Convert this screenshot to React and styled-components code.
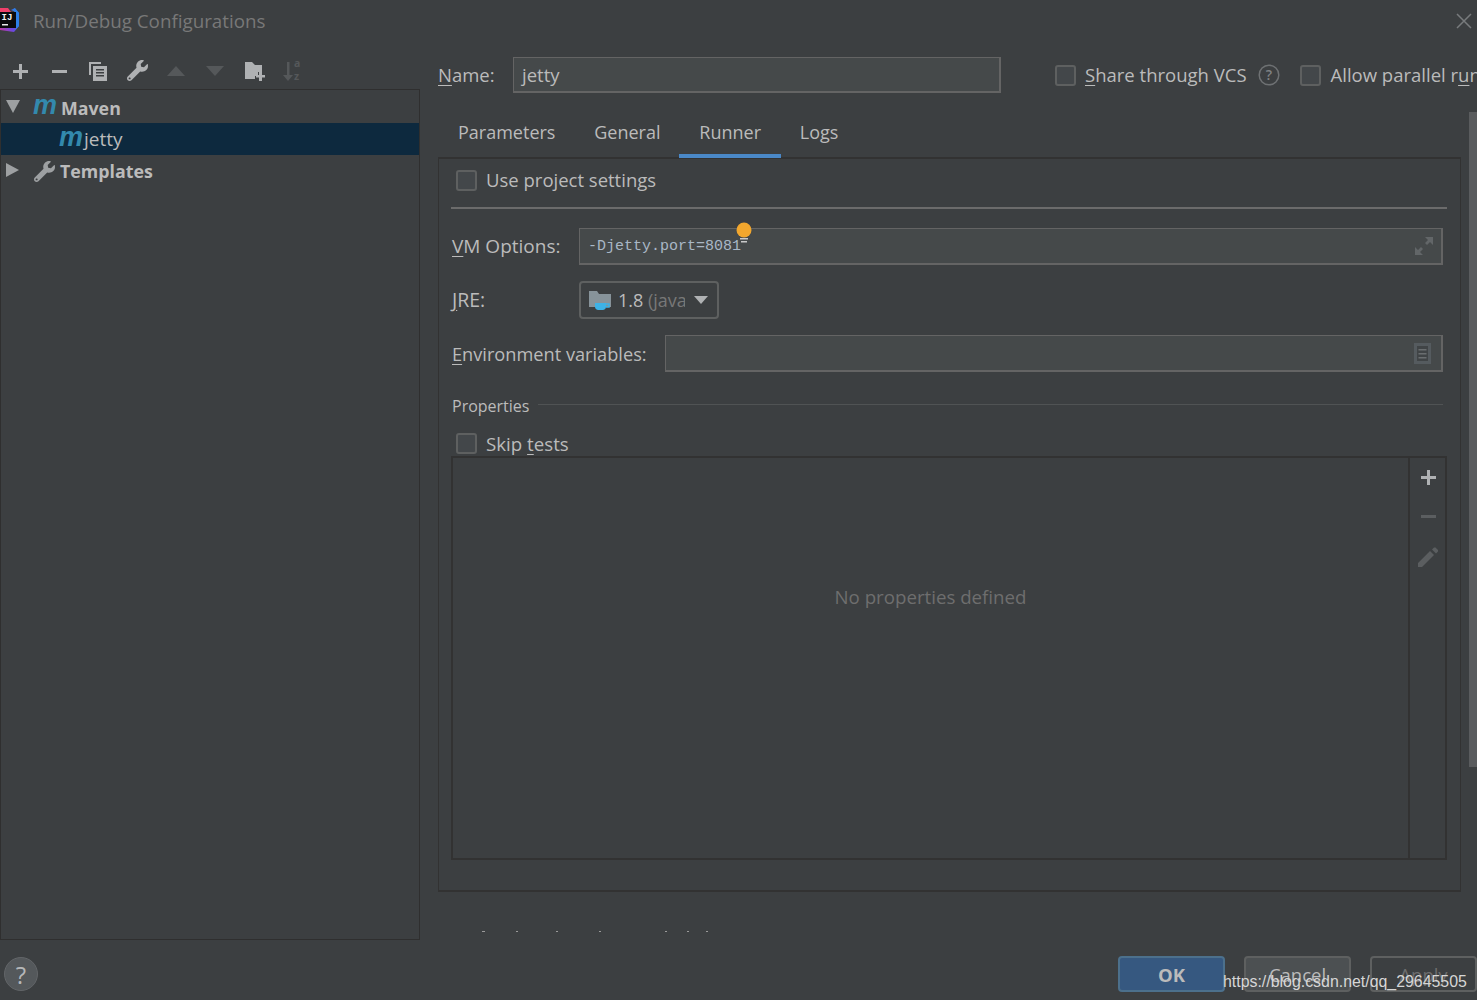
import React from 'react'
import styled, { createGlobalStyle } from 'styled-components'
import { FaWrench } from 'react-icons/fa'

const GlobalStyle = createGlobalStyle`
  html, body { margin: 0; padding: 0; background: #3c3f41; }
  * { box-sizing: border-box; }
`

const Dialog = styled.div`
  position: relative;
  width: 1477px;
  height: 1000px;
  overflow: hidden;
  background: #3c3f41;
  color: #bbbbbb;
  font-family: "Open Sans", "Noto Sans", sans-serif;
  font-size: 18.5px;
  display: flex;
  flex-direction: column;
`

/* title bar */
const TitleBar = styled.div`
  height: 42px;
  display: flex;
  align-items: center;
  justify-content: space-between;
  padding: 0 5px 0 0;
  flex: none;
`
const TitleLeft = styled.div`
  display: flex;
  align-items: center;
  gap: 14px;
`
const TitleText = styled.span`
  color: #787878;
  font-size: 18.8px;
`

const Body = styled.div`
  flex: 1;
  min-height: 0;
  display: grid;
  grid-template-columns: 420px 1fr;
`

/* left side */
const Sidebar = styled.div`
  display: flex;
  flex-direction: column;
  height: 898px;
`
const Toolbar = styled.div`
  height: 47px;
  flex: none;
  display: flex;
  align-items: center;
  padding: 10px 0 0 9px;
  gap: 17px;
`
const ToolIcon = styled.span`
  width: 22px;
  height: 22px;
  display: flex;
  align-items: center;
  justify-content: center;
  color: ${p => (p.$dim ? '#55585a' : '#afb1b3')};
`
const TreePanel = styled.div`
  flex: 1;
  border: 1px solid #2f2f2f;
  padding-top: 1px;
`
const TreeRow = styled.div`
  height: 32px;
  display: flex;
  align-items: center;
  padding-left: ${p => p.$indent || 0}px;
  background: ${p => (p.$selected ? '#0d293e' : 'transparent')};
  font-weight: ${p => (p.$bold ? 700 : 400)};
  font-size: ${p => (p.$bold ? 17.8 : 19)}px;
`
const Arrow = styled.span`
  width: 0;
  height: 0;
  flex: none;
  margin-left: 5px;
  margin-right: 13px;
  ${p => p.$open
    ? 'border-left: 7px solid transparent; border-right: 7px solid transparent; border-top: 13px solid #9da0a2; margin-top: -2px;'
    : 'border-top: 7px solid transparent; border-bottom: 7px solid transparent; border-left: 13px solid #9da0a2; margin-top: -2px; margin-right: 15px;'}
`
const MavenMark = styled.span`
  color: #3389ad;
  font-family: "Liberation Sans", sans-serif;
  font-style: italic;
  font-weight: 700;
  font-size: 27px;
  line-height: 24px;
  width: ${p => p.$w || 28}px;
  flex: none;
  position: relative;
  top: -2px;
`
const TreeLabel = styled.span`
  padding-top: 1px;
`
const TreeIcon = styled.span`
  width: 26px;
  flex: none;
  display: flex;
  align-items: center;
  color: #9da0a2;
`

/* right side */
const Main = styled.div`
  padding-left: 18px;
  min-width: 0;
  display: flex;
  flex-direction: column;
`
const NameRow = styled.div`
  margin-top: 15px;
  height: 36px;
  display: flex;
  align-items: center;
  white-space: nowrap;
  overflow: hidden;
  flex: none;
`
const Label = styled.label`
  flex: none;
  width: ${p => (p.$w ? `${p.$w}px` : 'auto')};
  font-size: ${p => p.$size || 18.5}px;
  padding-left: ${p => p.$pl || 0}px;
  margin-bottom: ${p => (p.$flat ? 0 : 2)}px;
`
const Mn = styled.span`
  text-decoration: underline;
  text-underline-offset: 3px;
`
const TextField = styled.div`
  height: ${p => p.$h || 36}px;
  background: #45494a;
  border: 2px solid #646464;
  border-width: 1px 2px 2px 1px;
  display: flex;
  align-items: center;
  justify-content: space-between;
  padding: 0 ${p => p.$pr || 7}px 0 8px;
  position: relative;
  flex: ${p => (p.$w ? 'none' : 1)};
  width: ${p => (p.$w ? `${p.$w}px` : 'auto')};
  min-width: 0;
`
const Check = styled.span`
  width: 21px;
  height: 21px;
  flex: none;
  border: 2px solid #5e6060;
  border-radius: 3px;
  background: #43474a;
`
const CheckRow = styled.div`
  display: flex;
  align-items: center;
  gap: ${p => p.$gap || 9}px;
  margin-left: ${p => p.$ml || 0}px;
`
const CheckText = styled.span`
  margin-bottom: 2px;
`
const Scroller = styled.div`
  flex: 1;
  min-height: 0;
  display: flex;
  margin-top: 19px;
`
const Pane = styled.div`
  width: 1023px;
  height: 820px;
  overflow: hidden;
  flex: none;
`
const ScrollThumb = styled.div`
  width: 8px;
  height: 655px;
  margin-left: 8px;
  background: #5a5c5e;
  flex: none;
`
const Tabs = styled.div`
  display: flex;
  height: 46px;
`
const Tab = styled.div`
  padding: 0 20px 2px;
  height: 46px;
  display: flex;
  align-items: center;
  font-size: 18px;
  border-bottom: 4px solid ${p => (p.$active ? '#4a88c7' : 'transparent')};
  margin-right: -1.200px;
  position: relative;
`
const TabPanel = styled.div`
  height: 735px;
  margin-top: -1px;
  border: 2px solid #323232;
  border-width: 2px 1px 2px 1px;
  padding: 0 13px 0 12px;
  display: flex;
  flex-direction: column;
`
const TopCheck = styled(CheckRow)`
  height: 46px;
  padding: 0 0 4px 5px;
  flex: none;
`
const Rule = styled.div`
  height: 2px;
  background: #6b6b6b;
  flex: none;
  margin-top: 2px;
`
const FormRow = styled.div`
  display: flex;
  align-items: center;
  flex: none;
  margin-top: ${p => p.$mt}px;
  height: ${p => p.$h}px;
  padding-right: 4px;
`
const Mono = styled.span`
  font-family: "Liberation Mono", monospace;
  font-size: 15px;
  color: #a9b7c6;
`
const Bulb = styled.span`
  position: absolute;
  left: 156px;
  top: -7px;
  width: 16px;
  height: 23px;
  display: block;
`
const Combo = styled.div`
  width: 140px;
  height: 38px;
  border: 2px solid #5e6060;
  border-radius: 4px;
  display: flex;
  align-items: center;
  padding-left: 8px;
  gap: 6px;
  white-space: nowrap;
`
const ComboText = styled.span`
  width: 67px;
  overflow: hidden;
  font-size: 18px;
`
const Muted = styled.span`
  color: #787878;
`
const ComboArrow = styled.span`
  width: 0;
  height: 0;
  flex: none;
  margin-left: 3px;
  border-left: 7px solid transparent;
  border-right: 7px solid transparent;
  border-top: 8px solid #afb1b3;
`
const GroupRow = styled.div`
  display: flex;
  align-items: center;
  gap: 9px;
  flex: none;
  margin-top: 18px;
  height: 30px;
  padding: 2px 4px 0 1px;
  font-size: 16px;
`
const GroupLine = styled.span`
  flex: 1;
  height: 1px;
  background: #505354;
  margin-top: -4px;
`
const SkipCheck = styled(CheckRow)`
  height: 27px;
  padding-left: 5px;
  margin-top: 10px;
  flex: none;
  font-size: 18.7px;
`
const PropTable = styled.div`
  height: 404px;
  margin-top: -1px;
  border: 2px solid #323232;
  display: flex;
  flex: none;
`
const EmptyArea = styled.div`
  flex: 1;
  display: flex;
  align-items: center;
  justify-content: center;
  color: #6e6e6e;
  font-size: 18.7px;
  padding-bottom: 124px;
`
const SideTools = styled.div`
  width: 37px;
  flex: none;
  border-left: 2px solid #323232;
  display: flex;
  flex-direction: column;
  align-items: center;
  padding-top: 10px;
  gap: 21px;
`
const ClippedText = styled.div`
  margin-top: 39px;
  margin-left: 44px;
  display: flex;
  height: 2px;
`
const ClipDot = styled.span`
  width: ${p => p.$w || 2}px;
  height: 2px;
  background: #9a9a9a;
  margin-left: ${p => p.$gap}px;
`

/* footer */
const Footer = styled.div`
  height: 60px;
  flex: none;
  display: flex;
  align-items: flex-start;
  justify-content: space-between;
  padding: 16px 0 0 4px;
`
const HelpButton = styled.div`
  width: 34px;
  height: 34px;
  margin-top: 1px;
  border-radius: 50%;
  background: #54585b;
  border: 1px solid #626568;
  color: #b5b7b9;
  font-size: 24px;
  display: flex;
  align-items: center;
  justify-content: center;
`
const Buttons = styled.div`
  display: flex;
  gap: 19px;
`
const Button = styled.div`
  width: 107px;
  height: 36px;
  border-radius: 4px;
  border: 2px solid ${p => (p.$primary ? '#4c708c' : '#5e6060')};
  background: ${p => (p.$primary ? '#365880' : p.$off ? 'transparent' : '#4c5052')};
  color: ${p => (p.$off ? '#6e6e6e' : '#bbbbbb')};
  font-weight: ${p => (p.$primary ? 700 : 400)};
  padding-top: 1px;
  display: flex;
  align-items: center;
  justify-content: center;
`
const Watermark = styled.div`
  position: absolute;
  left: 1223px;
  top: 972px;
  font-family: "Liberation Sans", sans-serif;
  font-size: 15.900px;
  line-height: 20px;
  color: #d6d6d6;
  white-space: nowrap;
`

const Plus = ({ c = 'currentColor' }) => (
  <svg width="18" height="18" viewBox="0 0 18 18"><path d="M8 2h3v6h6v3h-6v6H8v-6H2V8h6z" fill={c} /></svg>
)
const Minus = ({ c = 'currentColor' }) => (
  <svg width="18" height="18" viewBox="0 0 18 18"><path d="M2 8h15v3H2z" fill={c} /></svg>
)
const CopyIcon = () => (
  <svg width="20" height="20" viewBox="0 0 20 20">
    <path d="M1 1h12v2H3v11H1z" fill="currentColor" />
    <path d="M5 5h14v15H5z" fill="currentColor" />
    <path d="M8 8h8v1.500H8zM8 11h8v1.500H8zM8 14h8v1.500H8z" fill="#3c3f41" />
  </svg>
)
const TriUp = () => (
  <svg width="18" height="10" viewBox="0 0 18 10"><path d="M9 0l9 10H0z" fill="currentColor" /></svg>
)
const TriDown = () => (
  <svg width="18" height="10" viewBox="0 0 18 10"><path d="M0 0h18L9 10z" fill="currentColor" /></svg>
)
const FolderPlus = () => (
  <svg width="22" height="20" viewBox="-1 0 22 20">
    <path d="M1 1h7l3 3h7v7h-4v4h-3v3H1z" fill="currentColor" />
    <path d="M15 11h3v3h3v2.500h-3V20h-3v-3.500h-3V14h3z" fill="currentColor" />
  </svg>
)
const SortIcon = () => (
  <svg width="20" height="22" viewBox="0 0 20 22" fill="currentColor" style={{ overflow: 'visible' }}>
    <path d="M4 2h2.500v13H10l-5 6-5-6h4z" />
    <text x="11" y="7" fontSize="10.500" fontWeight="700" fontFamily="Open Sans, sans-serif">a</text>
    <text x="11" y="20" fontSize="10.500" fontWeight="700" fontFamily="Open Sans, sans-serif">z</text>
  </svg>
)
const AppLogo = () => (
  <svg width="19" height="26" viewBox="0 0 19 26" style={{ display: 'block', marginTop: -2 }}>
    <defs>
      <linearGradient id="ijg" x1="0" y1="1" x2="1" y2="0.300">
        <stop offset="0" stopColor="#c93a9c" />
        <stop offset="0.500" stopColor="#6a48e0" />
        <stop offset="1" stopColor="#2d7fe8" />
      </linearGradient>
    </defs>
    <path d="M0 1h8l3 4H0z" fill="#ef3f6a" />
    <path d="M11 3l4-2 4 5v13l-5 6-7-1-7-1v-5h16V5z" fill="url(#ijg)" />
    <path d="M14 1l5 5v13l-3 3z" fill="#2d7fe8" />
    <rect x="0" y="5" width="16" height="16" fill="#0b0b0d" />
    <text x="1.500" y="13" fontSize="9" fontWeight="700" fill="#f2f2f2" fontFamily="Liberation Mono, monospace">IJ</text>
    <rect x="2" y="17" width="6" height="1.500" fill="#e8e8e8" />
  </svg>
)
const CloseIcon = () => (
  <svg width="16" height="16" viewBox="0 0 16 16"><path d="M1 1l14 14M15 1L1 15" stroke="#787b7d" strokeWidth="1.500" fill="none" /></svg>
)
const HelpRing = () => (
  <svg width="22" height="22" viewBox="0 0 22 22" style={{ flex: 'none' }}>
    <circle cx="11" cy="11" r="9.800" stroke="#6e7173" strokeWidth="1.500" fill="none" />
    <text x="11" y="16" textAnchor="middle" fontSize="14" fontWeight="600" fill="#7f8284" fontFamily="Open Sans, sans-serif">?</text>
  </svg>
)
const ExpandIcon = () => (
  <svg width="20" height="20" viewBox="0 0 20 20" fill="#626668">
    <path d="M11 1h8v8l-3-3-3 3-2-2 3-3zM1 11l3 3 3-3 2 2-3 3 3 3H1z" />
  </svg>
)
const DocIcon = () => (
  <svg width="17" height="21" viewBox="0 0 17 21">
    <rect x="1.500" y="1.500" width="14" height="18" fill="#404446" stroke="#555b5f" strokeWidth="3" />
    <path d="M4.500 6h8v1.500h-8zM4.500 10h8v1.500h-8zM4.500 14h8v1.500h-8z" fill="#6a6e70" />
  </svg>
)
const PencilIcon = () => (
  <svg width="22" height="22" viewBox="0 0 22 22" fill="#5b5e60">
    <path d="M1 17L13 5l4 4L5 21H1zM15 3.500L17 1.500h1.500L21 4v1.500L19 7.500z" />
  </svg>
)
const JreIcon = () => (
  <svg width="23" height="22" viewBox="0 0 23 22">
    <path d="M0 2h8l2 3h12v13H0z" fill="#87939a" />
    <path d="M6 14h11v4c0 2-2 3-3 3H9c-1 0-3-1-3-3z" fill="#3db2e6" />
    <path d="M17 15h3v3h-3" fill="none" stroke="#3db2e6" strokeWidth="1.500" />
  </svg>
)
const BulbIcon = () => (
  <svg width="16" height="23" viewBox="0 0 16 23">
    <circle cx="8" cy="8" r="7.500" fill="#f2a72e" />
    <path d="M4 16h8v1.500H4zM5 19h6v1.500H5z" fill="#c9c9c9" />
  </svg>
)

const clipDots = [
  { gap: 0, w: 3 }, { gap: 31 }, { gap: 38 }, { gap: 41 }, { gap: 64 }, { gap: 20 }, { gap: 17 },
]

export default function App() {
  return (
    <Dialog>
      <GlobalStyle />
      <TitleBar>
        <TitleLeft>
          <AppLogo />
          <TitleText>Run/Debug Configurations</TitleText>
        </TitleLeft>
        <CloseIcon />
      </TitleBar>

      <Body>
        <Sidebar>
          <Toolbar>
            <ToolIcon><Plus /></ToolIcon>
            <ToolIcon><Minus /></ToolIcon>
            <ToolIcon><CopyIcon /></ToolIcon>
            <ToolIcon><FaWrench size={21} /></ToolIcon>
            <ToolIcon $dim><TriUp /></ToolIcon>
            <ToolIcon $dim><TriDown /></ToolIcon>
            <ToolIcon><FolderPlus /></ToolIcon>
            <ToolIcon $dim><SortIcon /></ToolIcon>
          </Toolbar>
          <TreePanel>
            <TreeRow $bold>
              <Arrow $open />
              <MavenMark>m</MavenMark>
              <TreeLabel>Maven</TreeLabel>
            </TreeRow>
            <TreeRow $selected $indent={58}>
              <MavenMark $w={25}>m</MavenMark>
              jetty
            </TreeRow>
            <TreeRow $bold>
              <Arrow />
              <TreeIcon><FaWrench size={21} /></TreeIcon>
              Templates
            </TreeRow>
          </TreePanel>
        </Sidebar>

        <Main>
          <NameRow>
            <Label $w={75}><Mn>N</Mn>ame:</Label>
            <TextField $w={488}>jetty</TextField>
            <CheckRow $ml={54}>
              <Check />
              <CheckText><Mn>S</Mn>hare through VCS</CheckText>
            </CheckRow>
            <CheckRow $ml={11}><HelpRing /></CheckRow>
            <CheckRow $ml={20} $gap={10}>
              <Check />
              <CheckText>Allow parallel r<Mn>u</Mn>n</CheckText>
            </CheckRow>
          </NameRow>

          <Scroller>
            <Pane>
              <Tabs>
                <Tab>Parameters</Tab>
                <Tab>General</Tab>
                <Tab $active>Runner</Tab>
                <Tab>Logs</Tab>
              </Tabs>
              <TabPanel>
                <TopCheck>
                  <Check />
                  <CheckText>Use project settings</CheckText>
                </TopCheck>
                <Rule />
                <FormRow $mt={19} $h={37}>
                  <Label $w={128} $size={19} $pl={1}><Mn>V</Mn>M Options:</Label>
                  <TextField $h={37}>
                    <Mono>-Djetty.port=8081</Mono>
                    <Bulb><BulbIcon /></Bulb>
                    <ExpandIcon />
                  </TextField>
                </FormRow>
                <FormRow $mt={16} $h={38}>
                  <Label $w={128} $size={19.5} $pl={1}><Mn>J</Mn>RE:</Label>
                  <Combo>
                    <JreIcon />
                    <ComboText>1.8 <Muted>(java 1.8)</Muted></ComboText>
                    <ComboArrow />
                  </Combo>
                </FormRow>
                <FormRow $mt={16} $h={37}>
                  <Label $w={214} $size={18.2} $pl={1} $flat><Mn>E</Mn>nvironment variables:</Label>
                  <TextField $h={37} $pr={10}>
                    <span />
                    <DocIcon />
                  </TextField>
                </FormRow>
                <GroupRow>
                  <span>Properties</span>
                  <GroupLine />
                </GroupRow>
                <SkipCheck>
                  <Check />
                  <span>Skip <Mn>t</Mn>ests</span>
                </SkipCheck>
                <PropTable>
                  <EmptyArea>No properties defined</EmptyArea>
                  <SideTools>
                    <Plus c="#afb1b3" />
                    <Minus c="#5b5e60" />
                    <PencilIcon />
                  </SideTools>
                </PropTable>
              </TabPanel>
              <ClippedText>
                {clipDots.map((d, i) => <ClipDot key={i} $gap={d.gap} $w={d.w} />)}
              </ClippedText>
            </Pane>
            <ScrollThumb />
          </Scroller>
        </Main>
      </Body>

      <Footer>
        <HelpButton>?</HelpButton>
        <Buttons>
          <Button $primary>OK</Button>
          <Button>Cancel</Button>
          <Button $off>Apply</Button>
        </Buttons>
      </Footer>
      <Watermark>https://blog.csdn.net/qq_29645505</Watermark>
    </Dialog>
  )
}
